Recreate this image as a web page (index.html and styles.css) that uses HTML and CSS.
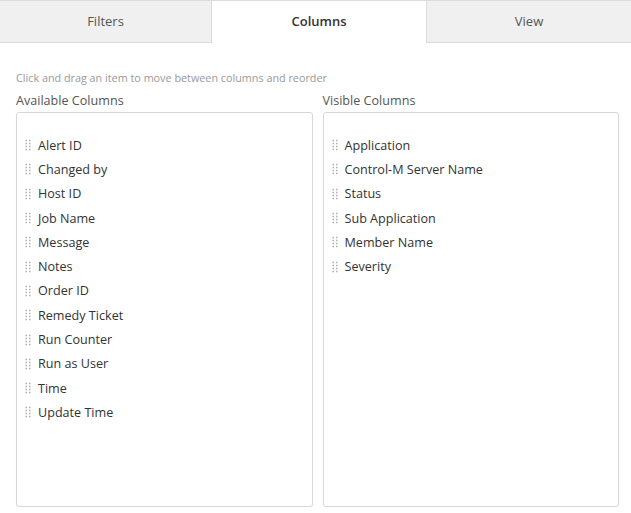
FILE: index.html
```html
<!DOCTYPE html>
<html lang="en">
<head>
  <meta charset="UTF-8" />
  <title>Columns</title>
  <link rel="stylesheet" href="styles.css">
</head>
<body>
  <div class="tabs">
    <div class="tab">Filters</div>
    <div class="tab active">Columns</div>
    <div class="tab">View</div>
  </div>
  <div class="content">
    <div class="hint">Click and drag an item to move between columns and reorder</div>
    <div class="lists">
      <div class="list-col">
        <div class="list-title">Available Columns</div>
        <ul class="list-box" id="available"></ul>
      </div>
      <div class="list-col">
        <div class="list-title">Visible Columns</div>
        <ul class="list-box" id="visible"></ul>
      </div>
    </div>
  </div>
  <script>
    const available = ['Alert ID', 'Changed by', 'Host ID', 'Job Name', 'Message', 'Notes', 'Order ID',
      'Remedy Ticket', 'Run Counter', 'Run as User', 'Time', 'Update Time'];
    const visible = ['Application', 'Control-M Server Name', 'Status', 'Sub Application', 'Member Name', 'Severity'];

    const handle = '<svg class="handle" width="7" height="12" viewBox="0 0 7 12">' +
      [1.5, 4.5, 7.5, 10.5].map(y =>
        `<rect x="0.5" y="${y - 0.75}" width="1.5" height="1.5"/><rect x="4" y="${y - 0.75}" width="1.5" height="1.5"/>`
      ).join('') + '</svg>';

    function fill(id, items) {
      document.getElementById(id).innerHTML = items
        .map(name => `<li class="item">${handle}<span>${name}</span></li>`)
        .join('');
    }

    fill('available', available);
    fill('visible', visible);
  </script>
</body>
</html>
```

FILE: styles.css
```css
body {
  font-family: "Open Sans", Arial, sans-serif;
  margin: 0;
  background: #fff;
  color: #333;
}
.tabs {
  display: grid;
  grid-template-columns: 212px 214px 1fr;
  border-top: 1px solid #dcdcdc;
  height: 42px;
}
.tab {
  display: flex;
  align-items: center;
  justify-content: center;
  padding-bottom: 2px;
  background: #f0f0f0;
  border-bottom: 1px solid #dcdcdc;
  font-size: 13px;
  color: #555;
}
.tab:first-child {
  border-right: 1px solid #dcdcdc;
}
.tab:last-child {
  border-left: 1px solid #dcdcdc;
}
.tab.active {
  background: #fff;
  border: none;
  font-weight: 600;
  color: #333;
}
.content {
  padding: 27px 12px 0 16px;
}
.hint {
  font-size: 10.8px;
  color: #999;
  line-height: 16px;
}
.lists {
  display: grid;
  grid-template-columns: 1fr 1fr;
  gap: 10px;
}
.list-title {
  font-size: 12.6px;
  color: #555;
  line-height: 18px;
  margin: 6px 0 2px 0;
}
.list-box {
  list-style: none;
  margin: 0;
  padding: 20px 0 0 8px;
  height: 395px;
  box-sizing: border-box;
  border: 1px solid #d8d8d8;
  border-radius: 3px;
  box-shadow: 0 1px 1px rgba(0, 0, 0, 0.08);
}
.item {
  display: flex;
  align-items: center;
  gap: 6px;
  height: 24.3px;
  font-size: 12.6px;
  color: #333;
}
.handle {
  fill: #b0b0b0;
  flex: none;
}
```
